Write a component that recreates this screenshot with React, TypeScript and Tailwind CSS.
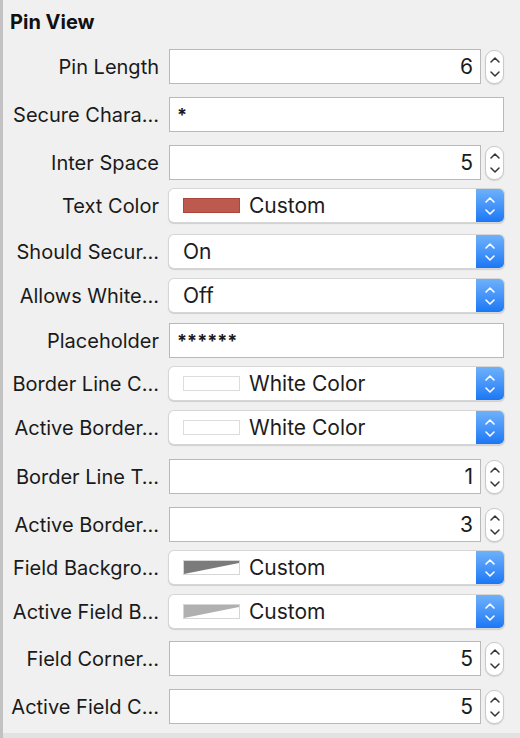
import React from "react";

type Row =
  | { kind: "num"; label: string; value: string; mt: number }
  | { kind: "text"; label: string; value: string; mt: number }
  | { kind: "pop"; label: string; value: string; mt: number; swatch?: "red" | "white" | "dark" | "light" };

const rows: Row[] = [
  { kind: "num", label: "Pin Length", value: "6", mt: 0 },
  { kind: "text", label: "Secure Chara…", value: "*", mt: 13 },
  { kind: "num", label: "Inter Space", value: "5", mt: 13 },
  { kind: "pop", label: "Text Color", value: "Custom", mt: 9, swatch: "red" },
  { kind: "pop", label: "Should Secur…", value: "On", mt: 13 },
  { kind: "pop", label: "Allows White…", value: "Off", mt: 11 },
  { kind: "text", label: "Placeholder", value: "******", mt: 11 },
  { kind: "pop", label: "Border Line C…", value: "White Color", mt: 9, swatch: "white" },
  { kind: "pop", label: "Active Border…", value: "White Color", mt: 11, swatch: "white" },
  { kind: "num", label: "Border Line T…", value: "1", mt: 15 },
  { kind: "num", label: "Active Border…", value: "3", mt: 13 },
  { kind: "pop", label: "Field Backgro…", value: "Custom", mt: 9, swatch: "dark" },
  { kind: "pop", label: "Active Field B…", value: "Custom", mt: 11, swatch: "light" },
  { kind: "num", label: "Field Corner…", value: "5", mt: 13 },
  { kind: "num", label: "Active Field C…", value: "5", mt: 13 },
];

function Stepper() {
  return (
    <div className="w-[19px] h-[34px] rounded-[9px] bg-white border border-[#c9c9c9] shadow-[0_1px_1px_rgba(0,0,0,0.12)] flex items-center justify-center">
      <svg width="12" height="26" viewBox="0 0 12 26" fill="none" stroke="#333" strokeWidth="1.5" strokeLinecap="round" strokeLinejoin="round">
        <path d="M2 8 L6 4 L10 8" />
        <path d="M2 18 L6 22 L10 18" />
      </svg>
    </div>
  );
}

function Swatch({ kind }: { kind: "red" | "white" | "dark" | "light" }) {
  if (kind === "red") {
    return <div className="w-[57px] h-[15px] bg-[#bd5a50] border border-[#a9473e] mr-[9px]" />;
  }
  if (kind === "white") {
    return <div className="w-[57px] h-[15px] bg-white border-[1.5px] border-[#dcdcdc] mr-[9px]" />;
  }
  const fill = kind === "dark" ? "#7b7b7b" : "#b0b0b0";
  return (
    <div className="w-[57px] h-[15px] border border-[#d6d6d6] mr-[9px] bg-white">
      <svg width="55" height="13" viewBox="0 0 55 13" className="block">
        <polygon points="0,0 55,0 55,2 0,13" fill={fill} />
      </svg>
    </div>
  );
}

function Popup({ value, swatch }: { value: string; swatch?: "red" | "white" | "dark" | "light" }) {
  return (
    <div className="flex-1 h-[33px] rounded-[5px] bg-white flex items-stretch shadow-[0_0_0_1px_#d6d6d6,0_1px_1px_1px_rgba(0,0,0,0.14)]">
      <div className="flex-1 flex items-center pl-[14px] text-[21px] text-[#1c1c1c]">
        {swatch && <Swatch kind={swatch} />}
        <span>{value}</span>
      </div>
      <div className="w-[28px] rounded-r-[5px] bg-gradient-to-b from-[#6db1fb] to-[#1877f5] flex items-center justify-center">
        <svg width="12" height="24" viewBox="0 0 12 24" fill="none" stroke="white" strokeWidth="1.6" strokeLinecap="round" strokeLinejoin="round">
          <path d="M2 8 L6 4 L10 8" />
          <path d="M2 16 L6 20 L10 16" />
        </svg>
      </div>
    </div>
  );
}

export default function App() {
  return (
    <div
      className="w-[520px] h-[738px] bg-[#f0f0f0] border-l-[3px] border-[#c2c2c2] flex flex-col text-[#1a1a1a]"
      style={{ fontFamily: "Inter, 'Liberation Sans', sans-serif" }}
    >
      <div className="pl-[7px] pt-[7px] h-[49px] text-[20px] font-bold text-[#111]">Pin View</div>
      {rows.map((r, i) => (
        <div
          key={i}
          className={r.kind === "pop" ? "flex items-center h-[33px] pr-[16px]" : "flex items-center h-[35px] pr-[16px]"}
          style={{ marginTop: r.mt }}
        >
          <div className="w-[166px] shrink-0 pr-[10px] text-right text-[20px] whitespace-nowrap overflow-hidden">
            {r.label}
          </div>
          {r.kind === "num" && (
            <div className="flex-1 flex items-center gap-[4px]">
              <div className="flex-1 h-[35px] bg-white border border-[#b9b9b9] flex items-center justify-end pr-[7px] text-[21px]">
                {r.value}
              </div>
              <Stepper />
            </div>
          )}
          {r.kind === "text" && (
            <div className="flex-1 h-[35px] bg-white border border-[#b9b9b9] flex items-center pl-[7px] text-[18px] font-bold">
              {r.value}
            </div>
          )}
          {r.kind === "pop" && <Popup value={r.value} swatch={r.swatch} />}
        </div>
      ))}
      <div className="mt-auto h-[5px] bg-[#e2e2e2]" />
    </div>
  );
}
